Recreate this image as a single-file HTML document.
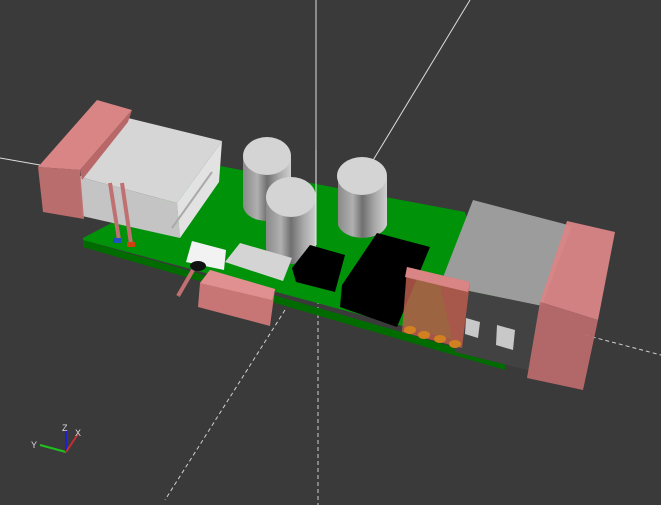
<!DOCTYPE html>
<html><head><meta charset="utf-8"><style>
html,body{margin:0;padding:0;background:#3a3a3a;}
svg{display:block}
</style></head><body>
<svg width="661" height="505" viewBox="0 0 661 505" xmlns="http://www.w3.org/2000/svg">
<rect width="661" height="505" fill="#3a3a3a"/>
<g stroke="#dcdcdc" stroke-width="1" fill="none">
<line x1="316" y1="0" x2="316" y2="245"/>
<line x1="470" y1="0" x2="372" y2="162"/>
<line x1="0" y1="158" x2="40" y2="165"/>
</g>
<g stroke="#cfcfcf" stroke-width="1" fill="none" stroke-dasharray="4,3">
<line x1="318" y1="300" x2="318" y2="505"/>
<line x1="285" y1="310" x2="165" y2="500"/>
<line x1="585" y1="335" x2="661" y2="355"/>
</g>
<polygon points="83,240 505,362 505,370 83,247" fill="#006c00"/>
<polygon points="83,238 220,166 465,212 510,355 83,240" fill="#00930a"/>
<polygon points="128,118 222,141 177,203 80,177" fill="#d6d6d6"/>
<polygon points="80,177 177,203 180,238 82,216" fill="#c4c4c4"/>
<polygon points="177,203 222,141 219,182 180,238" fill="#e2e2e2"/>
<line x1="172" y1="228" x2="212" y2="172" stroke="#aaa" stroke-width="2"/>
<polygon points="38,167 97,100 132,110 80,170" fill="#d98585"/>
<polygon points="38,167 80,170 84,219 43,212" fill="#c07070" opacity="0.95"/>
<polygon points="80,170 132,110 128,122 82,180" fill="#b86868"/>
<line x1="110" y1="183" x2="119" y2="240" stroke="#c07070" stroke-width="4"/>
<line x1="122" y1="183" x2="131" y2="244" stroke="#c07070" stroke-width="4"/>
<rect x="113" y="238" width="8" height="5" fill="#2050c0"/>
<rect x="127" y="242" width="8" height="5" fill="#d04010"/>
<defs>
<linearGradient id="cyl" x1="0" x2="1">
<stop offset="0" stop-color="#8a8a8a"/><stop offset="0.3" stop-color="#b0b0b0"/>
<stop offset="0.5" stop-color="#707070"/><stop offset="0.75" stop-color="#a8a8a8"/><stop offset="1" stop-color="#cfcfcf"/>
</linearGradient>
</defs>
<path d="M243,158 L243,205 A24,16 0 0 0 291,205 L291,158 Z" fill="url(#cyl)"/>
<ellipse cx="267" cy="156" rx="24" ry="19" fill="#d4d4d4"/>
<path d="M338,178 L338,225 A25,16 0 0 0 387,225 L387,178 Z" fill="url(#cyl)"/>
<ellipse cx="362" cy="176" rx="25" ry="19" fill="#d4d4d4"/>
<path d="M266,198 L266,248 A25,16 0 0 0 316,248 L316,198 Z" fill="url(#cyl)"/>
<ellipse cx="291" cy="197" rx="25" ry="20" fill="#d4d4d4"/>
<line x1="316" y1="150" x2="316" y2="245" stroke="#eee" stroke-width="1"/>
<polygon points="310,245 345,255 335,292 296,282 292,268" fill="#000"/>
<polygon points="377,233 430,247 397,327 340,307 342,285" fill="#000"/>
<polygon points="473,200 572,226 542,306 440,285" fill="#9c9c9c"/>
<polygon points="440,285 542,306 535,372 455,352" fill="#424242"/>
<polygon points="466,318 480,322 478,338 465,334" fill="#c8c8c8"/>
<polygon points="497,325 515,330 513,350 496,345" fill="#c8c8c8"/>
<polygon points="407,267 470,282 462,348 402,332" fill="#b85c4c" opacity="0.85"/>
<polygon points="407,267 470,282 468,292 405,277" fill="#d98585"/>
<g fill="#d08020"><ellipse cx="410" cy="330" rx="6" ry="4"/><ellipse cx="424" cy="335" rx="6" ry="4"/><ellipse cx="440" cy="339" rx="6" ry="4"/><ellipse cx="455" cy="344" rx="6" ry="4"/></g>
<polygon points="567,221 615,232 598,320 540,302" fill="#d98585" opacity="0.95"/>
<polygon points="540,302 598,320 583,390 527,378" fill="#b86a6a" opacity="0.95"/>
<polygon points="192,241 226,250 224,270 186,262" fill="#f2f2f2"/>
<ellipse cx="198" cy="266" rx="8" ry="5" fill="#111"/>
<line x1="193" y1="270" x2="178" y2="296" stroke="#c07070" stroke-width="4"/>
<polygon points="240,243 292,258 283,281 225,262" fill="#d4d4d4"/>
<polygon points="210,270 275,289 270,326 198,307 200,283" fill="#d07878" opacity="0.95"/>
<polygon points="210,270 275,289 272,300 200,283" fill="#e09090"/>
<g stroke-width="2">
<line x1="66" y1="452" x2="40" y2="445" stroke="#20c020"/>
<line x1="66" y1="452" x2="66" y2="430" stroke="#2020d0"/>
<line x1="66" y1="452" x2="78" y2="434" stroke="#c03030"/>
</g>
<g font-family="Liberation Sans, sans-serif" font-size="9" fill="#ddd">
<text x="31" y="448">Y</text><text x="62" y="431">Z</text><text x="75" y="436">X</text>
</g>
</svg>
</body></html>
